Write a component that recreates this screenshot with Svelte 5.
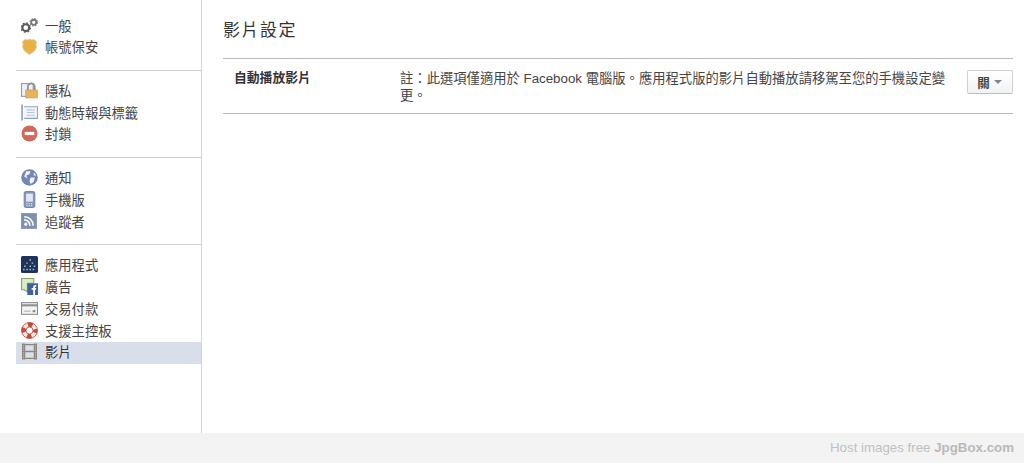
<script>
  const groups = [
    [
      { id: 'gears', label: '一般' },
      { id: 'badge', label: '帳號保安' }
    ],
    [
      { id: 'lock', label: '隱私' },
      { id: 'timeline', label: '動態時報與標籤' },
      { id: 'block', label: '封鎖' }
    ],
    [
      { id: 'globe', label: '通知' },
      { id: 'phone', label: '手機版' },
      { id: 'rss', label: '追蹤者' }
    ],
    [
      { id: 'apps', label: '應用程式' },
      { id: 'ads', label: '廣告' },
      { id: 'card', label: '交易付款' },
      { id: 'help', label: '支援主控板' },
      { id: 'film', label: '影片', selected: true }
    ]
  ];
</script>

{#snippet icon(id)}
  <svg class="icon" width="17" height="17" viewBox="0 0 16 16">
    {#if id === 'gears'}
      <circle cx="4.5" cy="10" r="3.2" fill="none" stroke="#5a5a5a" stroke-width="2" />
      <circle cx="4.5" cy="10" r="4.4" fill="none" stroke="#5a5a5a" stroke-width="1.2" stroke-dasharray="1.7 1.75" />
      <circle cx="12" cy="5" r="2.4" fill="none" stroke="#777" stroke-width="1.7" />
      <circle cx="12" cy="5" r="3.5" fill="none" stroke="#777" stroke-width="1" stroke-dasharray="1.4 1.35" />
    {:else if id === 'badge'}
      <path d="M3.5 1.5 Q6 2.5 8 1 Q10 2.5 12.5 1.5 L14.5 3.5 Q13.5 6 14.5 8.5 Q14 12.5 8 15.5 Q2 12.5 1.5 8.5 Q2.5 6 1.5 3.5 Z" fill="#e9b044" stroke="#e2cb97" stroke-width="0.9" />
    {:else if id === 'lock'}
      <rect x="0.5" y="1.5" width="11" height="12" fill="#eef1f6" stroke="#8c98ad" />
      <path d="M6.5 8 V4.5 a3.2 3.2 0 0 1 6.4 0 V8" fill="none" stroke="#8e8e8e" stroke-width="1.6" />
      <rect x="4.5" y="7.5" width="11" height="7.5" fill="#e8b35c" stroke="#c9964a" stroke-width="0.6" />
    {:else if id === 'timeline'}
      <path d="M1 0.5 V15.5" stroke="#7f97bd" stroke-width="1.4" />
      <path d="M3 2.5 H15.5 V13.5 H3" fill="#f3f5f9" stroke="#8fa2c2" />
      <path d="M5.5 5.5 H13 M5.5 8 H13 M5.5 10.5 H13" stroke="#b9c4d8" />
    {:else if id === 'block'}
      <circle cx="8" cy="8" r="7.5" fill="#cf6a5a" />
      <rect x="3.5" y="6.5" width="9" height="3" fill="#fff" />
    {:else if id === 'globe'}
      <circle cx="8" cy="8" r="7.8" fill="#6f88b8" />
      <path d="M5 2 L9 2 L8 5 L5 6 L6 9 L3 7 Z M9 8 L13 8 L12 12 L9 14 L8 11 Z M12 3 L14.5 6 L12 6 Z" fill="#f3f5f9" />
    {:else if id === 'phone'}
      <rect x="3" y="0.5" width="10" height="15" rx="2" fill="#8698b8" stroke="#7587a8" />
      <rect x="4.8" y="2.5" width="6.4" height="7.5" fill="#dfe6f1" />
      <path d="M5 12 H11 M5 13.8 H11" stroke="#e7ebf3" stroke-dasharray="1.2 1" />
    {:else if id === 'rss'}
      <rect x="0.5" y="0.5" width="14" height="14" fill="#7f90af" stroke="#8a9ab6" />
      <circle cx="4.5" cy="10.5" r="1.5" fill="#fff" />
      <path d="M3 6.5 a5.5 5.5 0 0 1 5.5 5.5 M3 3.5 a8.5 8.5 0 0 1 8.5 8.5" fill="none" stroke="#fff" stroke-width="1.5" />
    {:else if id === 'apps'}
      <rect width="16" height="16" rx="1.5" fill="#1f3358" />
      <path d="M8 3 h1.4 v1.4 h-1.4 Z M5 6 h1.4 v1.4 h-1.4 Z M10 6 h1.4 v1.4 h-1.4 Z M3 9 h1.4 v1.4 h-1.4 Z M8 9 h1.4 v1.4 h-1.4 Z M12 9 h1.4 v1.4 h-1.4 Z M2 12 h1.4 v1.4 h-1.4 Z M5 12 h1.4 v1.4 h-1.4 Z M8 12 h1.4 v1.4 h-1.4 Z M11 12 h1.4 v1.4 h-1.4 Z" fill="#9fc0e8" />
    {:else if id === 'ads'}
      <path d="M0.5 0.5 H12 V5 H6 V13 L3 11 H0.5 Z" fill="#d9ecc8" stroke="#7fa56a" />
      <rect x="6" y="5" width="10" height="11" fill="#3f5f9d" />
      <path d="M11.5 16 V11 H10 V9.4 H11.5 V8.4 Q11.5 6.6 13.4 6.6 H14.4 V8.2 H13.6 Q13.2 8.2 13.2 8.7 V9.4 H14.4 L14.2 11 H13.2 V16 Z" fill="#fff" />
    {:else if id === 'card'}
      <rect x="0.5" y="2.5" width="15" height="11" fill="#f4f4f4" stroke="#8a8a8a" />
      <rect x="1" y="4" width="14" height="2" fill="#8f8f8f" />
      <path d="M3 10.5 H9" stroke="#aaa" />
      <rect x="11" y="9.5" width="2.5" height="2" fill="#888" />
    {:else if id === 'help'}
      <circle cx="8" cy="8" r="5.4" fill="none" stroke="#f1e6e2" stroke-width="4.2" />
      <circle cx="8" cy="8" r="5.4" fill="none" stroke="#c24a3c" stroke-width="4.2" stroke-dasharray="4.24 4.24" stroke-dashoffset="2.12" />
      <circle cx="8" cy="8" r="7.5" fill="none" stroke="#c24a3c" stroke-width="0.8" />
      <circle cx="8" cy="8" r="3.3" fill="none" stroke="#c24a3c" stroke-width="0.8" />
    {:else if id === 'film'}
      <rect x="1" y="0.5" width="3" height="15" fill="#8b8378" />
      <rect x="12" y="0.5" width="3" height="15" fill="#8b8378" />
      <path d="M4 1.5 H12 M4 8 H12 M4 14.5 H12" stroke="#8b8378" stroke-width="1.2" />
      <path d="M2.5 2 V14 M13.5 2 V14" stroke="#c4bfb6" stroke-width="1" stroke-dasharray="1.2 1" />
    {/if}
  </svg>
{/snippet}

<div class="page">
  <div class="main">
    <nav class="sidebar">
      {#each groups as group}
        <ul class="group">
          {#each group as item}
            <li class="item" class:selected={item.selected}>
              {@render icon(item.id)}
              <span>{item.label}</span>
            </li>
          {/each}
        </ul>
      {/each}
    </nav>
    <section class="content">
      <h1>影片設定</h1>
      <div class="row">
        <div class="row-title">自動播放影片</div>
        <div class="row-text">註：此選項僅適用於 Facebook 電腦版。應用程式版的影片自動播放請移駕至您的手機設定變更。</div>
        <button class="select">關<span class="caret"></span></button>
      </div>
    </section>
  </div>
  <footer>Host images free <b>JpgBox.com</b></footer>
</div>

<style>
  :global(body) {
    margin: 0;
    background: #fff;
  }

  .page {
    height: 463px;
    display: flex;
    flex-direction: column;
    font-family: "Liberation Sans", "Noto Sans CJK TC", sans-serif;
    color: #333;
    overflow: hidden;
  }

  .main {
    height: 433px;
    display: flex;
  }

  .sidebar {
    flex: none;
    width: 185px;
    padding: 15.5px 0 0 16px;
    border-right: 1px solid #d3d3d3;
  }

  .group {
    list-style: none;
    margin: 0 0 9.9px;
    padding: 0 0 11px;
    border-bottom: 1px solid #d0d0d0;
  }

  .group:last-child {
    border-bottom: none;
  }

  .item {
    height: 21.75px;
    box-sizing: border-box;
    padding: 0 0 2.6px 5px;
    display: flex;
    align-items: center;
    gap: 7px;
    font-size: 13.3px;
    color: #444;
  }

  .item.selected {
    background: #d8dfea;
    color: #333;
  }

  .icon {
    flex: none;
  }

  .content {
    flex: 1;
    min-width: 0;
    padding: 0 11px 0 21px;
  }

  h1 {
    margin: 0;
    height: 59px;
    box-sizing: border-box;
    padding-top: 19px;
    font-size: 17px;
    line-height: 24px;
    font-weight: 400;
    letter-spacing: 1.5px;
    color: #333;
    border-bottom: 1px solid #bbb;
  }

  .row {
    display: flex;
    align-items: flex-start;
    height: 55px;
    box-sizing: border-box;
    border-bottom: 1px solid #bbb;
    padding-top: 11px;
  }

  .row-title {
    width: 177px;
    padding-left: 11px;
    flex: none;
    box-sizing: border-box;
    font-size: 12.8px;
    font-weight: 700;
    line-height: 15px;
    color: #333;
  }

  .row-text {
    width: 552px;
    flex: none;
    font-size: 13.32px;
    line-height: 17px;
    color: #444;
  }

  .select {
    flex: none;
    margin-left: auto;
    width: 46px;
    height: 24px;
    display: flex;
    align-items: center;
    justify-content: center;
    gap: 4px;
    padding: 0 1px 0 0;
    font: 700 12.5px "Liberation Sans", "Noto Sans CJK TC", sans-serif;
    color: #444;
    background: linear-gradient(#fff, #f1f2f4);
    border: 1px solid #d0d0d0;
    border-bottom-color: #bdbdbd;
    border-radius: 2px;
  }

  .caret {
    width: 0;
    height: 0;
    border: 4px solid transparent;
    border-top: 4px solid #7f8590;
    border-bottom: none;
  }

  footer {
    height: 30px;
    background: #f3f3f3;
    box-sizing: border-box;
    padding-right: 10px;
    text-align: right;
    font-size: 13.3px;
    line-height: 30px;
    color: #c0c0c0;
  }

  footer b {
    color: #b9b9b9;
  }
</style>
